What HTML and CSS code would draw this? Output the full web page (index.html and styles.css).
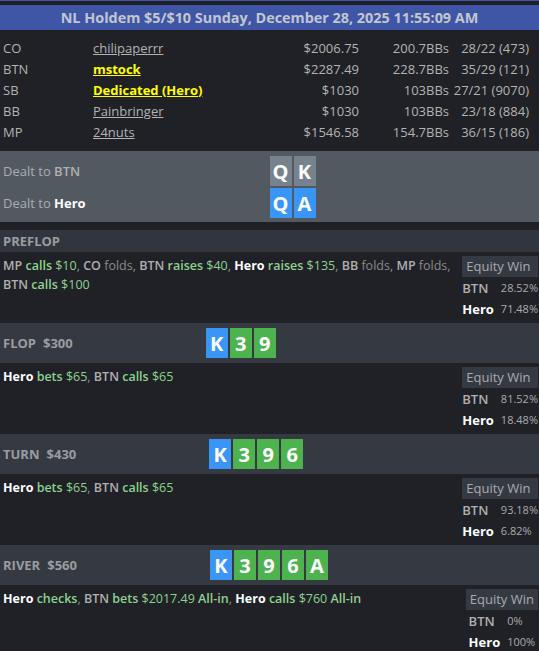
FILE: index.html
```html
<!DOCTYPE html>
<html lang="en">
<head>
<meta charset="utf-8">
<title>NL Holdem hand history</title>
<link rel="stylesheet" href="styles.css">
</head>
<body>
<div class="log">
  <div class="title">NL Holdem $5/$10 Sunday, December 28, 2025 11:55:09 AM</div>

  <div class="players">
    <div class="player"><span class="seat">CO</span><span class="name"><a>chilipaperrr</a></span><span class="num">$2006.75</span><span class="num">200.7BBs</span><span class="num">28/22 (473)</span></div>
    <div class="player"><span class="seat">BTN</span><span class="name hl"><a>mstock</a></span><span class="num">$2287.49</span><span class="num">228.7BBs</span><span class="num">35/29 (121)</span></div>
    <div class="player"><span class="seat">SB</span><span class="name hl"><a>Dedicated (Hero)</a></span><span class="num">$1030</span><span class="num">103BBs</span><span class="num">27/21 (9070)</span></div>
    <div class="player"><span class="seat">BB</span><span class="name"><a>Painbringer</a></span><span class="num">$1030</span><span class="num">103BBs</span><span class="num">23/18 (884)</span></div>
    <div class="player"><span class="seat">MP</span><span class="name"><a>24nuts</a></span><span class="num">$1546.58</span><span class="num">154.7BBs</span><span class="num">36/15 (186)</span></div>
  </div>

  <div class="dealt">
    <div class="dealt-row"><span class="dealt-label">Dealt to <b class="p">BTN</b></span><div class="cards"><span class="card grey">Q</span><span class="card grey">K</span></div></div>
    <div class="dealt-row"><span class="dealt-label">Dealt to <b class="hero">Hero</b></span><div class="cards"><span class="card blue">Q</span><span class="card blue">A</span></div></div>
  </div>

  <section class="street first">
    <div class="street-head short"><span class="street-name">PREFLOP</span></div>
    <div class="street-body">
      <p class="actions"><b class="p">MP</b> <b class="act">calls</b> <span class="amt">$10</span>, <b class="p">CO</b> <span class="fold">folds</span>, <b class="p">BTN</b> <b class="act">raises</b> <span class="amt">$40</span>, <b class="hero">Hero</b> <b class="act">raises</b> <span class="amt">$135</span>, <b class="p">BB</b> <span class="fold">folds</span>, <b class="p">MP</b> <span class="fold">folds</span>, <b class="p">BTN</b> <b class="act">calls</b> <span class="amt">$100</span></p>
      <div class="equity">
        <div class="eq-head">Equity Win</div>
        <div class="eq-rows"><b class="p">BTN</b><span class="eq-val">28.52%</span><b class="hero">Hero</b><span class="eq-val">71.48%</span></div>
      </div>
    </div>
  </section>

  <section class="street">
    <div class="street-head"><span class="street-name">FLOP</span><span class="pot">$300</span><div class="cards board"><span class="card blue">K</span><span class="card green">3</span><span class="card green">9</span></div></div>
    <div class="street-body">
      <p class="actions"><b class="hero">Hero</b> <b class="act">bets</b> <span class="amt">$65</span>, <b class="p">BTN</b> <b class="act">calls</b> <span class="amt">$65</span></p>
      <div class="equity">
        <div class="eq-head">Equity Win</div>
        <div class="eq-rows"><b class="p">BTN</b><span class="eq-val">81.52%</span><b class="hero">Hero</b><span class="eq-val">18.48%</span></div>
      </div>
    </div>
  </section>

  <section class="street">
    <div class="street-head"><span class="street-name">TURN</span><span class="pot">$430</span><div class="cards board"><span class="card blue">K</span><span class="card green">3</span><span class="card green">9</span><span class="card green">6</span></div></div>
    <div class="street-body">
      <p class="actions"><b class="hero">Hero</b> <b class="act">bets</b> <span class="amt">$65</span>, <b class="p">BTN</b> <b class="act">calls</b> <span class="amt">$65</span></p>
      <div class="equity">
        <div class="eq-head">Equity Win</div>
        <div class="eq-rows"><b class="p">BTN</b><span class="eq-val">93.18%</span><b class="hero">Hero</b><span class="eq-val">6.82%</span></div>
      </div>
    </div>
  </section>

  <section class="street">
    <div class="street-head"><span class="street-name">RIVER</span><span class="pot">$560</span><div class="cards board"><span class="card blue">K</span><span class="card green">3</span><span class="card green">9</span><span class="card green">6</span><span class="card green">A</span></div></div>
    <div class="street-body">
      <p class="actions"><b class="hero">Hero</b> <b class="act">checks</b>, <b class="p">BTN</b> <b class="act">bets</b> <span class="amt">$2017.49</span> <b class="act">All-in</b>, <b class="hero">Hero</b> <b class="act">calls</b> <span class="amt">$760</span> <b class="act">All-in</b></p>
      <div class="equity">
        <div class="eq-head">Equity Win</div>
        <div class="eq-rows"><b class="p">BTN</b><span class="eq-val">0%</span><b class="hero">Hero</b><span class="eq-val">100%</span></div>
      </div>
    </div>
  </section>
</div>
</body>
</html>
```

FILE: styles.css
```css
html, body {
  margin: 0;
  padding: 0;
  background: #1f2126;
}

body {
  font-family: "Open Sans", "DejaVu Sans", sans-serif;
  font-size: 13px;
  color: #b3b3b3;
}

.log {
  border-top: 1px solid #3f56a6;
}

.title {
  margin-top: 4px;
  height: 25px;
  line-height: 25px;
  background: #3f56a6;
  color: #c3c6ce;
  font-weight: 700;
  font-size: 14.4px;
  text-align: center;
}

.players {
  padding: 7px 10px 9px 3px;
}

.player {
  display: grid;
  grid-template-columns: 90px 1fr 90px 90px 80px;
  height: 21px;
  align-items: center;
}

.num {
  text-align: right;
}

.name a {
  color: #b3b3b3;
  text-decoration: underline;
}

.name.hl a {
  color: #ffff00;
  font-weight: 700;
}

.dealt {
  background: #535961;
  padding: 5px 0 4px;
  display: flex;
  flex-direction: column;
  gap: 2px;
}

.dealt-row {
  display: grid;
  grid-template-columns: 1fr 1fr;
  align-items: center;
  height: 30px;
}

.dealt-label {
  padding-left: 3px;
  color: #a9adb3;
}

.cards {
  display: flex;
  gap: 2px;
}

.card {
  width: 22px;
  height: 30px;
  display: flex;
  align-items: center;
  justify-content: center;
  color: #fff;
  font-weight: 700;
  font-size: 20px;
}

.card.grey { background: #78828d; }
.card.blue { background: #3a96f6; }
.card.green { background: #4cb34f; }

b.p {
  font-weight: 600;
  color: #b0b0b0;
}

b.hero {
  font-weight: 700;
  color: #ffffff;
}

.street.first {
  margin-top: 8px;
}

.street-head {
  background: #353a42;
  height: 40px;
  display: flex;
  align-items: center;
  padding-left: 3px;
  font-weight: 700;
  color: #9a9ca0;
}

.street-head.short {
  height: 22px;
  background: #31363e;
}

.pot {
  margin-left: 7px;
}

.cards.board {
  margin-left: 133px;
}

.street-body {
  display: flex;
  align-items: flex-start;
}

.actions {
  flex: 1;
  margin: 0;
  padding: 4px 4px 0 3px;
  font-size: 12.5px;
  line-height: 19px;
  color: #8a8a8a;
}

b.act {
  font-weight: 600;
  color: #8fd18f;
}

.amt {
  color: #8fd18f;
}

.fold {
  color: #8a8a8a;
}

.equity {
  margin: 4px 1px 4px 0;
}

.eq-head {
  background: #353a42;
  height: 21px;
  line-height: 21px;
  padding: 0 4px;
  color: #a9abb0;
}

.eq-rows {
  display: grid;
  grid-template-columns: auto auto;
  grid-auto-rows: 21px;
  column-gap: 7px;
  align-items: center;
  justify-content: center;
}

.eq-rows b.p,
.eq-rows b.hero {
  font-size: 13px;
}

.eq-val {
  font-size: 11px;
  color: #a9abb0;
}
```
